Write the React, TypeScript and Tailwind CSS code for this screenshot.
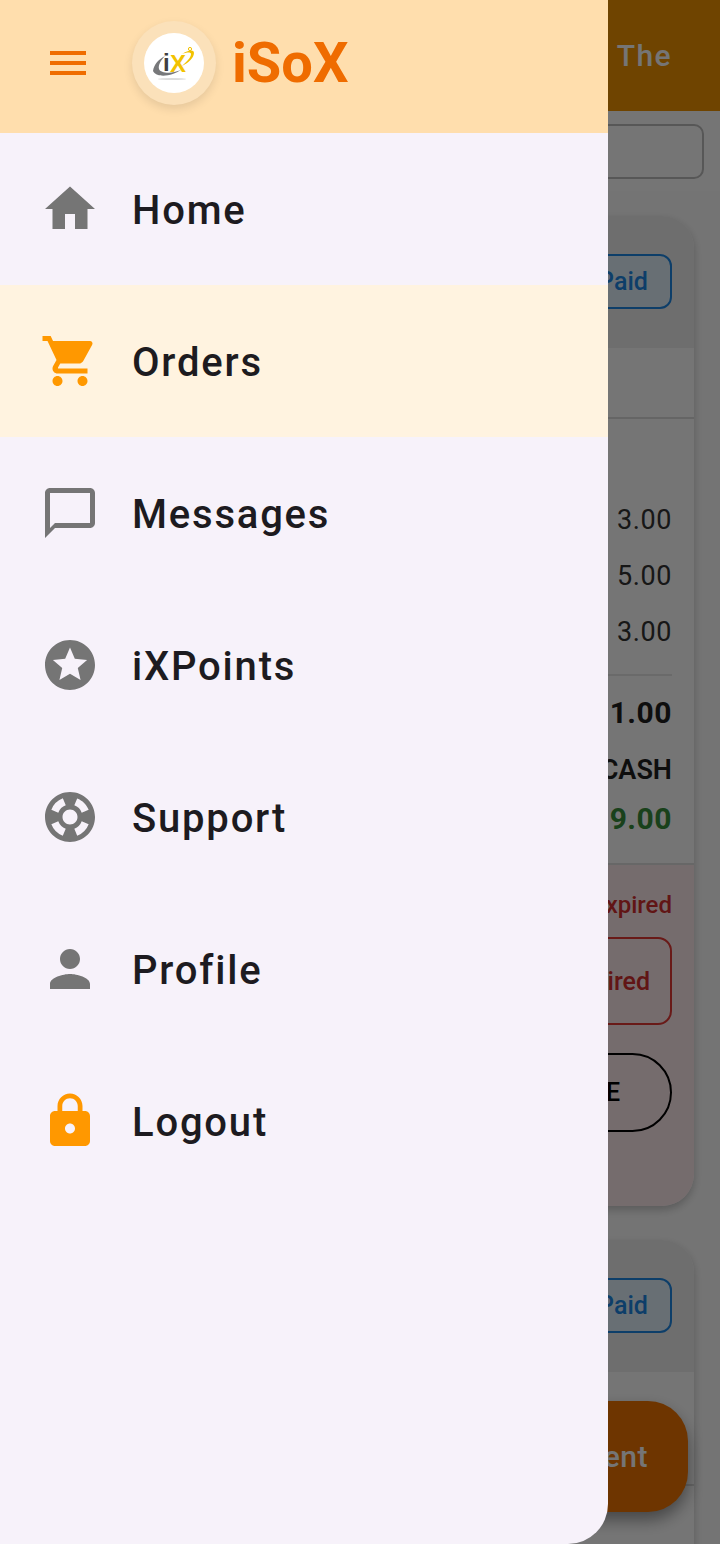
import { ReactNode } from "react";
import {
  MdChatBubbleOutline,
  MdHome,
  MdLock,
  MdMenu,
  MdPerson,
  MdShoppingCart,
  MdStars,
  MdSupport,
} from "react-icons/md";

interface MenuItem {
  label: string;
  icon: ReactNode;
  selected?: boolean;
}

const menuItems: MenuItem[] = [
  { label: "Home", icon: <MdHome size={60} className="text-[#757575]" /> },
  {
    label: "Orders",
    icon: <MdShoppingCart size={60} className="text-[#FF9800]" />,
    selected: true,
  },
  { label: "Messages", icon: <MdChatBubbleOutline size={60} className="text-[#757575]" /> },
  { label: "iXPoints", icon: <MdStars size={60} className="text-[#757575]" /> },
  { label: "Support", icon: <MdSupport size={60} className="text-[#757575]" /> },
  { label: "Profile", icon: <MdPerson size={60} className="text-[#757575]" /> },
  { label: "Logout", icon: <MdLock size={60} className="text-[#FF9800]" /> },
];

function LogoMark() {
  return (
    <svg width="60" height="60" viewBox="0 0 60 60">
      <ellipse cx="28" cy="46" rx="14" ry="1" fill="#dcdcdc" />
      <path
        d="M9 38 C10 31 15 26 21 23 C17 27 14 32 15 36 C17 41 30 41 38 36 C28 44 12 45 9 38 Z"
        fill="#77787a"
      />
      <path
        d="M38 21 C44 17 50 16 50 20 C50 25 44 30 38 33 C42 29 47 25 47 21 C47 19 43 19 38 21 Z"
        fill="#f2c200"
      />
      <circle cx="46" cy="16" r="1.6" fill="none" stroke="#f2c200" strokeWidth="1" />
      <text
        x="19"
        y="38"
        fontFamily="Liberation Sans, sans-serif"
        fontWeight="700"
        fontSize="24"
        fill="#3f3f41"
      >
        i
      </text>
      <text
        x="26"
        y="39"
        fontFamily="Liberation Sans, sans-serif"
        fontWeight="700"
        fontSize="24"
        fill="#f2c200"
      >
        X
      </text>
    </svg>
  );
}

function PaidBadge() {
  return (
    <div className="flex h-[55px] w-[100px] items-center justify-center rounded-[12px] border-2 border-[#1E88E5] bg-[#E3F2FD] pl-[2px] pt-[2px] text-[25px] font-medium text-[#1E88E5]">
      Paid
    </div>
  );
}

function AmountRow({ value }: { value: string }) {
  return <div className="flex h-[56px] items-center justify-end pt-[2px] text-[27px] tracking-[0.6px] text-[#333333]">{value}</div>;
}

function BackgroundPage() {
  return (
    <div className="flex h-full flex-col bg-[#FDFDFD]">
      <div className="flex h-[111px] shrink-0 items-center justify-end bg-[#F19400] pr-[48px] text-[30px] font-medium tracking-[1.4px] text-white">
        The
      </div>
      <div className="flex h-[80px] shrink-0 items-center bg-white pl-[16px] pr-[16px]">
        <div className="h-[55px] w-full rounded-[10px] border-2 border-[#BDBDBD]" />
      </div>

      <div className="flex flex-col gap-[34px] px-[26px] pt-[25px]">
        <div className="flex h-[990px] flex-col overflow-hidden rounded-[32px] bg-white shadow-[0_4px_8px_rgba(0,0,0,0.22)]">
          <div className="flex h-[132px] shrink-0 items-center justify-end bg-[#F0F0F0] pb-[2px] pr-[22px]">
            <PaidBadge />
          </div>
          <div className="h-[71px] shrink-0 border-b-2 border-[#DDDDDD]" />
          <div className="flex flex-col pl-[300px] pr-[22px] pt-[72px]">
            <AmountRow value="3.00" />
            <AmountRow value="5.00" />
            <AmountRow value="3.00" />
            <div className="mt-[15px] border-t-2 border-[#E8E8E8]" />
            <div className="mt-[17px] flex justify-end text-[30px] font-bold leading-[40px] tracking-[0.5px] text-[#1f1f1f]">
              1.00
            </div>
            <div className="mt-[19px] flex justify-end text-[27px] font-semibold leading-[36px] text-[#1f1f1f]">
              CASH
            </div>
            <div className="mt-[11px] flex justify-end text-[30px] font-bold leading-[40px] tracking-[0.5px] text-[#388E3C]">
              9.00
            </div>
          </div>
          <div className="mt-[24px] flex flex-1 flex-col border-t-2 border-[#E0E0E0] bg-[#FFEBEE] pl-[300px] pr-[22px]">
            <div className="mt-[24px] flex justify-end text-[24px] font-medium leading-[32px] text-[#D32F2F]">
              Expired
            </div>
            <div className="mt-[16px] flex h-[88px] items-center justify-end rounded-[14px] border-2 border-[#E53935] pr-[20px] pt-[2px] text-[25px] font-medium text-[#D32F2F]">
              Expired
            </div>
            <div className="mt-[28px] flex h-[79px] items-center justify-end rounded-[40px] border-2 border-black pr-[50px] text-[25px] font-medium text-black">
              E
            </div>
          </div>
        </div>

        <div className="flex h-[400px] flex-col overflow-hidden rounded-[32px] bg-white shadow-[0_4px_8px_rgba(0,0,0,0.22)]">
          <div className="flex h-[132px] shrink-0 items-center justify-end bg-[#F0F0F0] pb-[2px] pr-[22px]">
            <PaidBadge />
          </div>
          <div className="h-[114px] shrink-0 border-b-2 border-[#DDDDDD]" />
        </div>
      </div>
    </div>
  );
}

export default function App() {
  return (
    <div className="relative h-[1544px] w-[720px] overflow-hidden font-['Roboto',sans-serif]">
      <BackgroundPage />

      <div className="absolute right-[32px] top-[1401px] flex h-[111px] w-[300px] items-center justify-end rounded-[40px] bg-[#F07400] pr-[40px] text-[30px] font-medium tracking-[0.5px] text-white shadow-[0_8px_16px_rgba(0,0,0,0.4)]">
        Payment
      </div>

      {/* scrim */}
      <div className="absolute inset-0 bg-black/54" />

      <aside className="absolute left-0 top-0 flex h-full w-[608px] flex-col overflow-hidden rounded-br-[40px] bg-[#F7F2FA]">
        <header className="flex h-[133px] shrink-0 items-center bg-[#FFDEAD] pb-[7px] pl-[44px]">
          <MdMenu size={48} className="text-[#EF6C00]" />
          <div className="ml-[40px] flex h-[84px] w-[84px] items-center justify-center rounded-full bg-[#FBE1BA] shadow-[0_4px_10px_rgba(0,0,0,0.1)]">
            <div className="flex h-[60px] w-[60px] items-center justify-center rounded-full bg-white">
              <LogoMark />
            </div>
          </div>
          <span className="ml-[16px] text-[56px] font-bold leading-none text-[#EF6C00]">iSoX</span>
        </header>

        <nav className="flex flex-col">
          {menuItems.map((item) => (
            <div
              key={item.label}
              className={
                item.selected
                  ? "flex h-[152px] items-center bg-[#FFF3E0] pl-[40px]"
                  : "flex h-[152px] items-center pl-[40px]"
              }
            >
              {item.icon}
              <span className="ml-[32px] pt-[4px] text-[40px] font-medium leading-none tracking-[1.8px] text-[#1D1B20]">
                {item.label}
              </span>
            </div>
          ))}
        </nav>
      </aside>
    </div>
  );
}
